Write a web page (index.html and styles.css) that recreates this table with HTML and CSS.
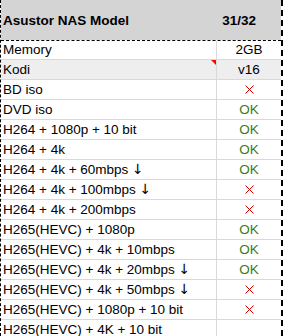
FILE: index.html
```html
<!DOCTYPE html>
<html lang="en">
<head>
  <meta charset="UTF-8">
  <title>Asustor NAS - Codecs</title>
  <link rel="stylesheet" href="styles.css">
</head>
<body>

  <div class="sheet">
    <div class="head">
      <span>Asustor NAS Model</span>
      <span>31/32</span>
    </div>

    <div class="grid">
      <div class="row first"><div class="label">Memory</div><div class="value">2GB</div></div>
      <div class="row shaded"><div class="label note">Kodi</div><div class="value">v16</div></div>
      <div class="row"><div class="label">BD iso</div><div class="value no"><svg width="9" height="9" viewBox="0 0 9 9"><path d="M0.5 0.5L8.5 8.5M8.5 0.5L0.5 8.5"/></svg></div></div>
      <div class="row"><div class="label">DVD iso</div><div class="value ok">OK</div></div>
      <div class="row"><div class="label">H264 + 1080p + 10 bit</div><div class="value ok">OK</div></div>
      <div class="row"><div class="label">H264 + 4k</div><div class="value ok">OK</div></div>
      <div class="row"><div class="label">H264 + 4k + 60mbps <span class="arrow">↓</span></div><div class="value ok">OK</div></div>
      <div class="row"><div class="label">H264 + 4k + 100mbps <span class="arrow">↓</span></div><div class="value no"><svg width="9" height="9" viewBox="0 0 9 9"><path d="M0.5 0.5L8.5 8.5M8.5 0.5L0.5 8.5"/></svg></div></div>
      <div class="row"><div class="label">H264 + 4k + 200mbps</div><div class="value no"><svg width="9" height="9" viewBox="0 0 9 9"><path d="M0.5 0.5L8.5 8.5M8.5 0.5L0.5 8.5"/></svg></div></div>
      <div class="row"><div class="label">H265(HEVC) + 1080p</div><div class="value ok">OK</div></div>
      <div class="row"><div class="label">H265(HEVC) + 4k + 10mbps</div><div class="value ok">OK</div></div>
      <div class="row"><div class="label">H265(HEVC) + 4k + 20mbps <span class="arrow">↓</span></div><div class="value ok">OK</div></div>
      <div class="row"><div class="label">H265(HEVC) + 4k + 50mbps <span class="arrow">↓</span></div><div class="value no"><svg width="9" height="9" viewBox="0 0 9 9"><path d="M0.5 0.5L8.5 8.5M8.5 0.5L0.5 8.5"/></svg></div></div>
      <div class="row"><div class="label">H265(HEVC) + 1080p + 10 bit</div><div class="value no"><svg width="9" height="9" viewBox="0 0 9 9"><path d="M0.5 0.5L8.5 8.5M8.5 0.5L0.5 8.5"/></svg></div></div>
      <div class="row"><div class="label">H265(HEVC) + 4K + 10 bit</div><div class="value"></div></div>
    </div>
  </div>

</body>
</html>
```

FILE: styles.css
```css
body {
  font-family: "Liberation Sans", Arial, sans-serif;
  font-size: 13.5px;
  background-color: #fff;
  color: #000;
  margin: 0;
  padding: 0;
}

.sheet {
  width: 280px;
  height: 336px;
  overflow: hidden;
  border-left: 1px dashed #000;
  border-right: 2px dashed #000;
}

.head {
  height: 40px;
  background-color: #d4d4d4;
  display: flex;
  justify-content: space-between;
  align-items: center;
  padding: 0 25px 0 2px;
  font-weight: bold;
}

.grid {
  border-top: 1px dashed #000;
}

.row {
  display: flex;
  height: 19px;
  line-height: 19px;
  border-bottom: 1px solid #d9d9d9;
}

.row.first {
  height: 18px;
  line-height: 18px;
}

.row.shaded {
  background-color: #eeeeee;
}

.label {
  width: 213px;
  padding-left: 2px;
  white-space: nowrap;
  position: relative;
}

.arrow {
  font-family: "DejaVu Sans", sans-serif;
  font-size: 14px;
}

/* little red corner on cells that carry a comment */
.label.note::after {
  content: "";
  position: absolute;
  top: 0;
  right: 0;
  border-top: 5px solid #ff0000;
  border-left: 5px solid transparent;
}

.value {
  flex: 1;
  border-left: 1px solid #d9d9d9;
  display: flex;
  align-items: center;
  justify-content: center;
}

.value.ok {
  color: #3c7a14;
}

.value.no svg {
  stroke: #d40000;
  stroke-width: 1;
  fill: none;
}
```
